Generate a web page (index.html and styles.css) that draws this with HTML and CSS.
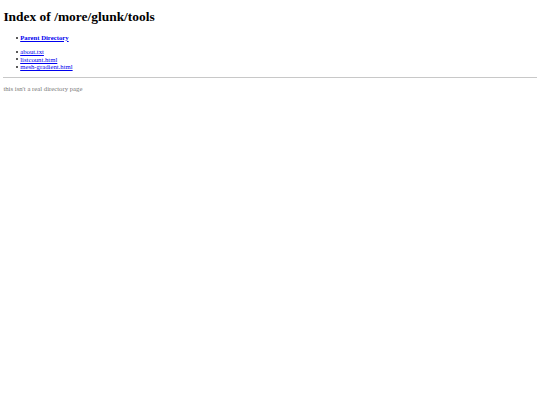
FILE: index.html
```html
<!DOCTYPE html>
<html>
<head>
<meta charset="utf-8">
<title>Index of /more/glunk/tools</title>
<link rel="stylesheet" href="styles.css">
</head>
<body class="page">
<h1 class="title">Index of /more/glunk/tools</h1>
<ul class="list">
<li class="item"><a class="link parent" href="#">Parent Directory</a></li>
</ul>
<ul class="list">
<li class="item"><a class="link" href="#">about.txt</a></li>
<li class="item"><a class="link" href="#">listcount.html</a></li>
<li class="item"><a class="link" href="#">mesh-gradient.html</a></li>
</ul>
<hr class="rule">
<p class="note">this isn't a real directory page</p>
</body>
</html>
```
FILE: styles.css
```css
html { background: #fff; }
.page {
  margin: 3.4px;
  font-family: "Liberation Serif", "Times New Roman", serif;
  font-size: 6.72px;
  color: #000;
}
.title {
  font-size: 13.44px;
  font-weight: bold;
  margin: 6px 0 8.5px;
}
.list {
  margin: 6.5px 0;
  padding-left: 16.8px;
  list-style: none;
}
.item { line-height: 7.6px; }
.item::before {
  content: "";
  display: inline-block;
  width: 2px;
  height: 2px;
  border-radius: 50%;
  background: #222;
  margin-left: -4.2px;
  margin-right: 2.2px;
  vertical-align: 1.4px;
}
.link { color: #00e; text-decoration: underline; }
.parent { font-weight: bold; }
.rule {
  border: none;
  border-top: 1px solid #c8c8c8;
  margin: 3.4px 0;
  height: 0;
}
.note {
  color: #777;
  margin: 6.6px 0;
}
```
